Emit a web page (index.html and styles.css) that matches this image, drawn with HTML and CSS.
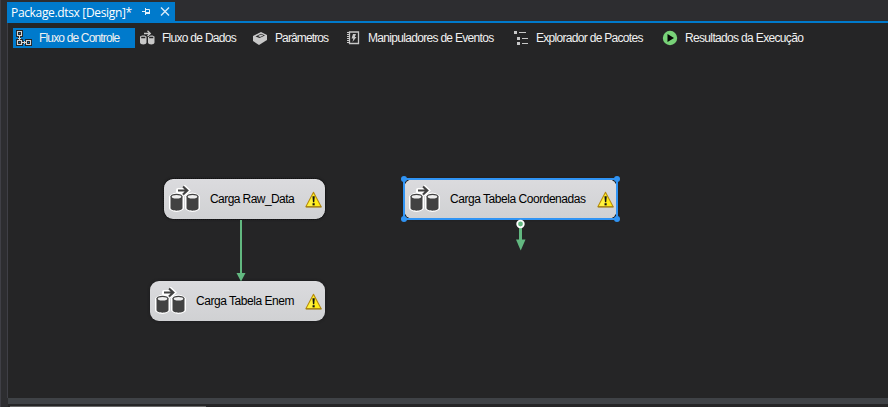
FILE: index.html
```html
<!DOCTYPE html>
<html lang="pt-BR">
<head>
<meta charset="utf-8">
<title>Package.dtsx</title>
<link rel="stylesheet" href="styles.css">
</head>
<body>
<svg width="0" height="0" class="defs">
  <symbol id="transfer" viewBox="0 0 32 28">
    <g fill="#fff" stroke="#fff" stroke-width="4" stroke-linejoin="round">
      <path d="M3 12Q9 7 14 12V23Q9 27 3 23ZM19 12Q24 7 30 12V23Q24 27 19 23ZM10 5H17V3L19 6L17 8V7H10Z"/>
    </g>
    <g fill="#424242">
      <path d="M2.500 11.500V23C2.500 26.500 14.500 26.500 14.500 23V11.500ZM18.500 11.500V23C18.500 26.500 30.500 26.500 30.500 23V11.500Z"/>
      <ellipse cx="8.500" cy="11.500" rx="6" ry="2.800"/><ellipse cx="24.500" cy="11.500" rx="6" ry="2.800"/>
    </g>
    <ellipse cx="8.500" cy="11.700" rx="4.800" ry="1.800" fill="#eee"/><ellipse cx="24.500" cy="11.700" rx="4.800" ry="1.800" fill="#eee"/>
    <path d="M10 5.500H19M15 1.500L19.300 5.500L15 9.500" fill="none" stroke="#fff" stroke-width="5"/>
    <path d="M10 5.500H19M15 1.500L19.300 5.500L15 9.500" fill="none" stroke="#424242" stroke-width="2.200"/>
  </symbol>
  <symbol id="warning" viewBox="0 0 16 16">
    <path d="M8 1.200L15.200 14.800H.8Z" fill="#ffec16" stroke="#b58a10" stroke-linejoin="round"/>
    <path d="M8 2.500V14H2Z" fill="#fff65c" opacity=".6"/>
    <path d="M1 15H15.500" stroke="#9b7911"/>
    <path d="M7 5H9.200L8.700 10.500H7.500Z" fill="#111"/><rect x="7.100" y="11.500" width="2" height="2" fill="#111"/>
  </symbol>
</svg>
<div class="app">
  <header class="tabs">
    <div class="doc-tab">
      <span class="doc-name">Package.dtsx [Design]*</span>
      <svg class="pin" width="9" height="8" viewBox="0 0 9 8"><path d="M0 3.500H3M3.500 0V7M3 1.500H7.500V5.500M3 4.500H8M3 5.500H8" fill="none" stroke="#e4f1fa"/></svg>
      <svg class="close" width="10" height="9" viewBox="0 0 10 9"><path d="M1 .5L9 8.500M9 .5L1 8.500" stroke="#d8ebf9" stroke-width="1.400"/></svg>
    </div>
  </header>
  <main class="editor">
    <nav class="views">
      <div class="view control active">
        <svg width="16" height="16" viewBox="0 0 16 16"><path d="M1.500 1.500H5.500V5.500H1.500ZM1.500 10.500H5.500V14.500H1.500ZM10.500 10.500H14.500V14.500H10.500ZM3.500 6V10M6 12.500H10M2 8.500H5M8.500 11V14" fill="none" stroke="#252526" stroke-width="3"/><path d="M1.500 1.500H5.500V5.500H1.500ZM1.500 10.500H5.500V14.500H1.500ZM10.500 10.500H14.500V14.500H10.500ZM3.500 6V10M6 12.500H10M2 8.500H5M8.500 11V14" fill="none" stroke="#d6d6d6" stroke-width="1.100"/></svg>
        <span class="label">Fluxo de Controle</span>
      </div>
      <div class="view data">
        <svg width="16" height="16" viewBox="0 0 16 16"><path d="M0 7V12.500C0 15 6.500 15 6.500 12.500V7C6.500 5 0 5 0 7ZM8 7V12.500C8 15 14.500 15 14.500 12.500V7C14.500 5 8 5 8 7Z" fill="#c8c8c8"/><path d="M1.200 7.500H5.300M9.200 7.500H13.300" stroke="#252526" stroke-width="1.400"/><path d="M4 3.500H10M7.500 .8L10.300 3.500L7.500 6" fill="none" stroke="#252526" stroke-width="3"/><path d="M4 3.500H10M7.500 .8L10.300 3.500L7.500 6" fill="none" stroke="#c8c8c8" stroke-width="1.300"/></svg>
        <span class="label">Fluxo de Dados</span>
      </div>
      <div class="view params">
        <svg width="16" height="16" viewBox="0 0 16 16"><path d="M0 6L8 2L14 5V10L6 15L0 11Z" fill="#c8c8c8"/><path d="M2.500 6.500L8 3.800L12 5.500L6.500 8Z" fill="#252526"/><path d="M5 6L8 4.500L10.500 5.500L7 7Z" fill="#c8c8c8"/></svg>
        <span class="label">Parâmetros</span>
      </div>
      <div class="view events">
        <svg width="16" height="16" viewBox="0 0 16 16"><path d="M3.500 2H12.500V13.500H3.500Z" fill="none" stroke="#c8c8c8" stroke-width="1.300"/><path d="M2 2V14" stroke="#c8c8c8" stroke-width="2" stroke-dasharray="1 1"/><path d="M7 4H10L8.800 7H10.500L6.500 12L7.300 8.500H5.500Z" fill="#c8c8c8"/></svg>
        <span class="label">Manipuladores de Eventos</span>
      </div>
      <div class="view explorer">
        <svg width="16" height="16" viewBox="0 0 16 16"><path d="M0 1H3V4H0ZM3 7H6V10H3ZM3 12H6V15H3ZM5 2H12V3H5ZM8 8H14V9H8ZM8 13H14V14H8Z" fill="#c8c8c8"/></svg>
        <span class="label">Explorador de Pacotes</span>
      </div>
      <div class="view results">
        <svg width="16" height="16" viewBox="0 0 16 16"><circle cx="8" cy="8" r="7.200" fill="#78d278"/><path d="M5.500 4L12 8L5.500 12Z" fill="#050505"/></svg>
        <span class="label">Resultados da Execução</span>
      </div>
    </nav>
    <section class="canvas">
      <svg class="links" width="880" height="347" viewBox="8 51 880 347">
        <path d="M241 220V275" stroke="#62b880" stroke-width="2"/>
        <path d="M236.500 273H245.500L241 281.500Z" fill="#62b880"/>
        <path d="M520.500 225V242" stroke="#62b880" stroke-width="3"/>
        <path d="M516 239.500H525.500L520.700 250.500Z" fill="#62b880"/>
        <circle cx="520.500" cy="224" r="3.300" fill="#62b880" stroke="#fff" stroke-width="1.800"/>
      </svg>
      <div class="node raw"><svg class="flow"><use href="#transfer"/></svg><span class="label">Carga Raw_Data</span><svg class="warn"><use href="#warning"/></svg></div>
      <div class="node enem"><svg class="flow"><use href="#transfer"/></svg><span class="label">Carga Tabela Enem</span><svg class="warn"><use href="#warning"/></svg></div>
      <div class="node coord"><svg class="flow"><use href="#transfer"/></svg><span class="label">Carga Tabela Coordenadas</span><svg class="warn"><use href="#warning"/></svg><i class="grip tl"></i><i class="grip tr"></i><i class="grip bl"></i><i class="grip br"></i></div>
    </section>
  </main>
  <div class="splitter"></div>
  <footer class="bottom"><div class="bottom-tab"></div></footer>
</div>
</body>
</html>
```

FILE: styles.css
```css
* { box-sizing: border-box; }
body { margin: 0; background: #2d2d30; font: 12px "Liberation Sans", Arial, sans-serif; }
.defs { position: absolute; }
.app { width: 888px; height: 407px; overflow: hidden; padding-left: 7px; border-left: 1px solid #3f3f46; display: flex; flex-direction: column; }
.tabs { height: 23px; margin-left: -1px; padding-top: 2px; border-bottom: 2px solid #007acc; flex: none; }
.doc-tab { width: 168px; height: 19px; background: #007acc; color: #fff; display: flex; align-items: center; padding-left: 4px; }
.doc-name { font: 12px/19px "Open Sans", sans-serif; width: 121px; height: 20px; padding-top: 1px; white-space: nowrap; letter-spacing: -0.34px; }
.pin { margin-left: 10px; }
.close { margin-left: 9px; }
.editor { height: 375px; flex: none; background: #252526; box-shadow: -1px 0 #3f3f46; }
.views { height: 28px; padding: 5px 0 0 5px; display: flex; gap: 2px; color: #f1f1f1; }
.view { height: 20px; display: flex; align-items: center; gap: 6px; padding-left: 3px; flex: none; }
.view svg { flex: none; }
.label { white-space: nowrap; }
.active { background: #007acc; gap: 7px; }
.control { width: 122px; letter-spacing: -0.84px; }
.data { width: 111px; letter-spacing: -0.72px; }
.params { width: 91px; letter-spacing: -0.88px; }
.events { width: 166px; letter-spacing: -0.69px; }
.explorer { width: 146px; letter-spacing: -0.7px; }
.results { width: 150px; gap: 7px; letter-spacing: -0.66px; }
.canvas { position: relative; height: 347px; }
.links { position: absolute; left: 0; top: 0; z-index: 1; }
.node { position: absolute; height: 40px; border-radius: 9px; background: linear-gradient(#dbdbde, #d0d1d3); color: #000; display: flex; align-items: center; padding: 0 3px 0 4px; box-shadow: 0 0 3px #18181a; }
.flow { width: 32px; height: 28px; flex: none; }
.node .label { margin-left: 10px; }
.warn { width: 17px; height: 17px; margin-left: auto; flex: none; }
.raw { left: 156px; top: 128px; width: 161px; outline: 1px dotted #111; letter-spacing: -0.57px; }
.enem { left: 142px; top: 230px; width: 175px; letter-spacing: -0.46px; }
.coord { left: 396px; top: 128px; width: 213px; letter-spacing: -0.46px; }
.coord::after { content: ""; position: absolute; inset: -1px; border: 2px solid #3094f4; }
.grip { position: absolute; width: 6px; height: 6px; border-radius: 50%; background: #3094f4; z-index: 2; }
.tl, .tr { top: -3px; }
.bl, .br { bottom: -3px; }
.tl, .bl { left: -3px; }
.tr, .br { right: -3px; }
.splitter { height: 6px; flex: none; background: #3f4246; }
.bottom { height: 3px; padding: 2px 0 0 2px; background: #252526; }
.bottom-tab { width: 196px; height: 1px; background: #686868; }
```
